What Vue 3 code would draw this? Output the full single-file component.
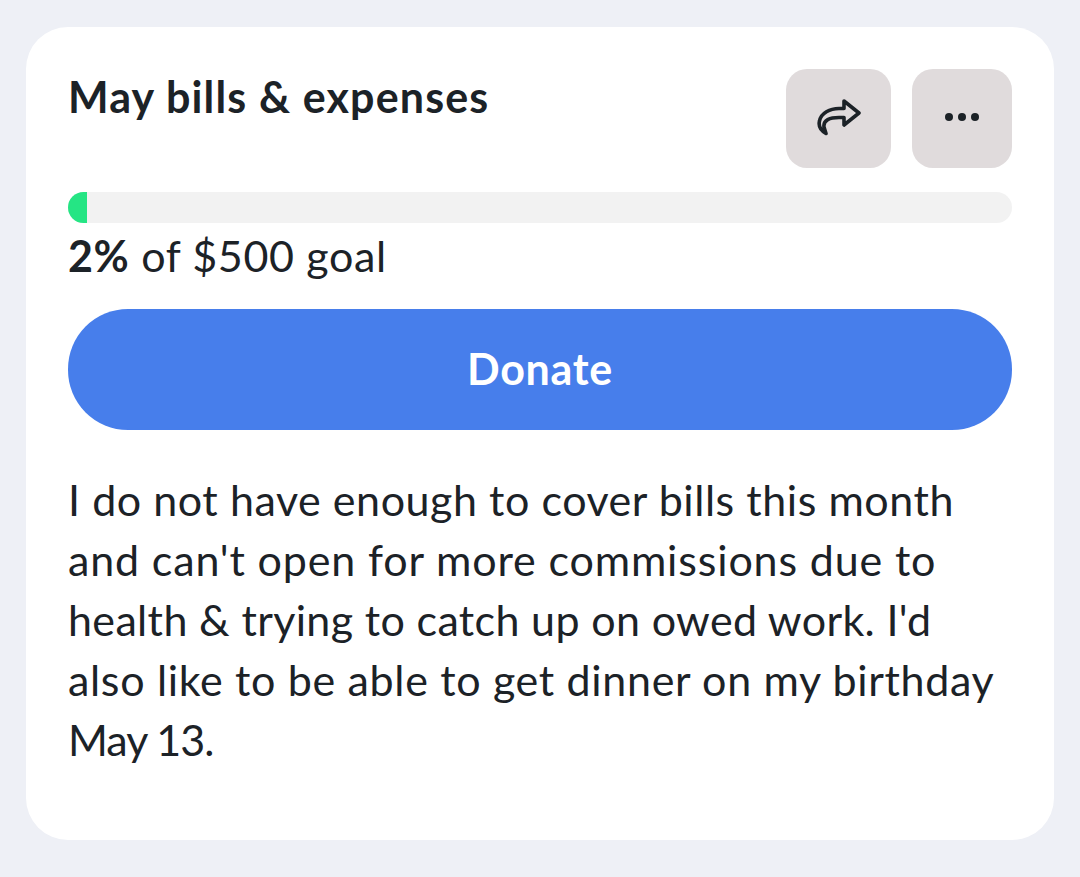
<script setup>
const lines = [
  "I do not have enough to cover bills this month",
  "and can't open for more commissions due to",
  "health & trying to catch up on owed work. I'd",
  "also like to be able to get dinner on my birthday",
  "May 13.",
];
</script>

<template>
  <div class="page">
    <section class="card">
      <header class="head">
        <h1 class="title">May bills &amp; expenses</h1>
        <div class="actions">
          <button class="icon-btn" aria-label="Share">
            <svg class="share" viewBox="0 0 46 38" fill="none" stroke="#1c2227" stroke-width="3.6" stroke-linejoin="round" stroke-linecap="round">
              <path d="M28 3 L43 15 L28 27 V19.5 H23 C14 19.5 7 22 8 29 L10 35.5 C4 32 2.5 27 3.5 23 C5 15 14 10.5 23 10.5 H28 Z" />
            </svg>
          </button>
          <button class="icon-btn dots" aria-label="More">
            <span class="dot"></span><span class="dot"></span><span class="dot"></span>
          </button>
        </div>
      </header>
      <div class="track"><div class="fill"></div></div>
      <p class="goal"><strong>2%</strong> of $500 goal</p>
      <button class="donate">Donate</button>
      <p class="desc"><span v-for="l in lines" :key="l" class="line">{{ l }}</span></p>
    </section>
  </div>
</template>

<style>
html, body { margin: 0; background: #eef0f6; }
</style>

<style scoped>
.page {
  box-sizing: border-box;
  height: 877px;
  padding: 27px 26px 37px;
  background: #eef0f6;
  font-family: "Lato", "Noto Sans", sans-serif;
  color: #1c2227;
}
.card {
  box-sizing: border-box;
  height: 813px;
  background: #fff;
  border-radius: 42px;
  padding: 42px 42px 0;
}
.head { display: flex; justify-content: space-between; align-items: flex-start; height: 99px; }
.title { margin: 7px 0 0; font-size: 43px; line-height: 42px; font-weight: 700; letter-spacing: 1.15px; }
.actions { display: flex; gap: 21px; }
.icon-btn {
  width: 105px; height: 99px; border: 0; padding: 0; border-radius: 21px;
  background: #e0dbdc; display: flex; align-items: center; justify-content: center; gap: 5px;
}
.share { width: 46px; height: 38px; margin-bottom: 3px; }
.dots { width: 100px; }
.dot { width: 8px; height: 8px; border-radius: 50%; background: #1c2227; margin-bottom: 3px; }
.track { margin-top: 24px; height: 31px; border-radius: 16px; background: #f2f2f2; overflow: hidden; }
.fill { width: 19px; height: 100%; background: #25e584; }
.goal { margin: 11px 0 0; font-size: 43px; line-height: 44px; letter-spacing: 0.65px; }
.goal strong { font-weight: 700; }
.donate {
  display: block; width: 100%; height: 121px; margin-top: 31px; border: 0; border-radius: 60px; padding: 0 0 2px;
  background: #477eeb; color: #fff; font: 700 43px "Lato", sans-serif; letter-spacing: 0.7px;
}
.desc { margin: 40px 0 0; font-size: 43px; line-height: 60px; }
.line { display: block; white-space: nowrap; letter-spacing: 0.55px; }
.line:nth-child(2) { letter-spacing: 0.85px; }
.line:nth-child(3) { letter-spacing: 0.35px; }
.line:nth-child(4) { letter-spacing: 0.67px; }
.line:nth-child(5) { letter-spacing: -1px; }
</style>
